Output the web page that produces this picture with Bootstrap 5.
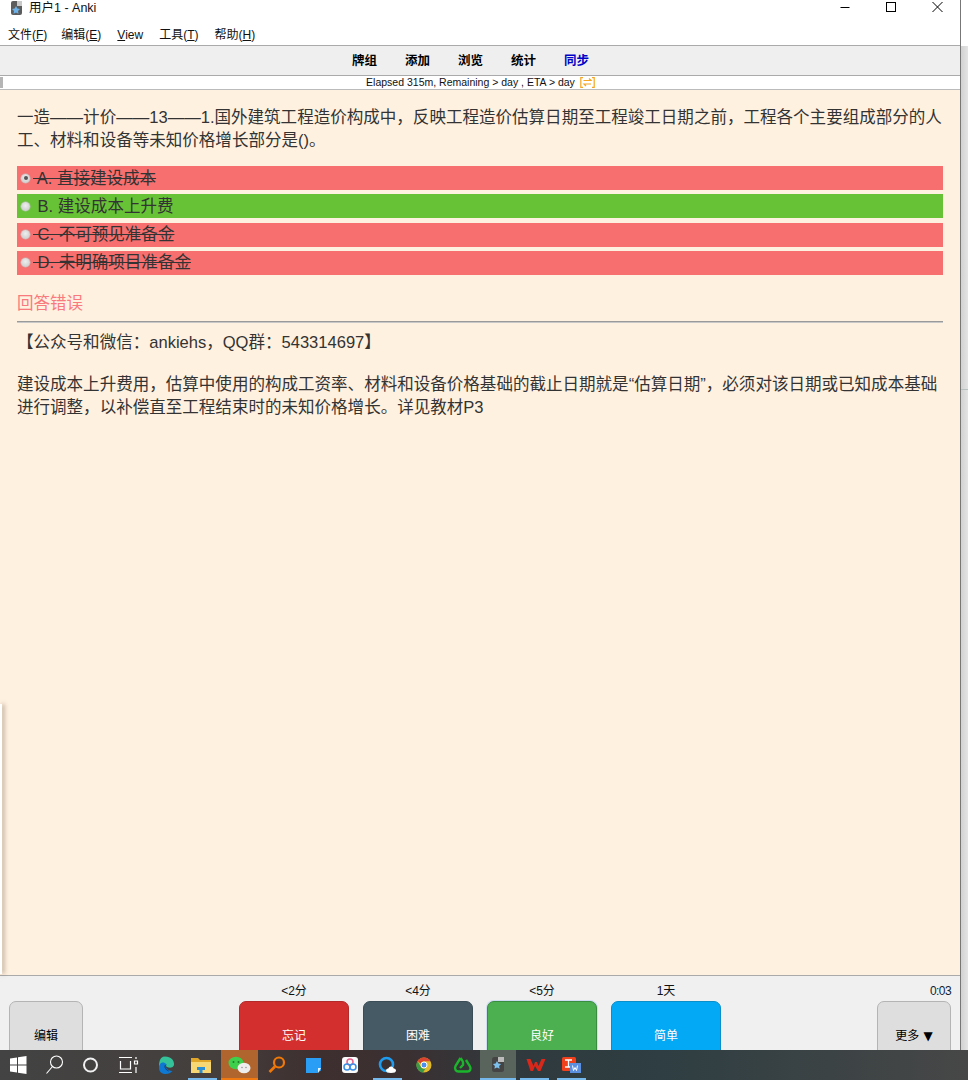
<!DOCTYPE html>
<html lang="zh-CN">
<head>
<meta charset="utf-8">
<title>用户1 - Anki</title>
<link rel="stylesheet" href="https://cdn.jsdelivr.net/npm/bootstrap@5.3.0/dist/css/bootstrap.min.css">
<style>
html,body{height:1080px;overflow:hidden}
body{font-family:"Liberation Sans","Noto Sans CJK SC",sans-serif;font-size:12px;color:#000;background:#fff;position:relative}
.desk{height:1050px}
.win{width:961px;border-right:1px solid #777}
.strip{width:7px;background:linear-gradient(90deg,#d2d2d2,#e4e4e4);position:relative;overflow:hidden}
.strip-top{height:46px;background:#fff}
.strip-line{height:1px;background:#b9c0c0;margin-top:343px}
.titlebar{height:22px;padding-left:10px}
.title-text{margin-left:6px;line-height:17px;font-size:12.5px;color:#111}
.winctl{position:absolute;top:0;right:8px}
.winctl svg{display:block}
.ctl{width:46px;height:15px}
.menubar{height:23px;padding-left:8px;line-height:27px;color:#111}
.menu-first{margin-right:-2px}
.toolbar{height:31px;background:#efefef;border-top:1px solid #aaa;border-bottom:1px solid #aaa;padding:2px 19px 0 0;font-weight:700;font-size:12.5px;gap:28px;line-height:27px}
.toolbar .sync{color:#0000c8}
.progressrow{height:13px;background:#fff;font-size:10.5px;line-height:13px;position:relative;color:#111;padding-left:1px}
.tick{position:absolute;left:0;top:1px;width:3px;height:11px;background:#b5b5b5}
.orange{margin-left:5px}
.content{height:887px;background:#fff1e0;border-top:1px solid #bbb;border-bottom:1px solid #aaa;padding:16px 17px 0;color:#333;font-size:16.55px;line-height:23px;position:relative}
.qtext{margin:0 0 14px}
.opt{height:24px;line-height:23px;margin-bottom:4.3px;display:flex;align-items:center;padding-left:4px;white-space:pre}
.opt-bad{background:#f76f6f}
.opt-good{background:#67c236}
.struck{text-decoration:line-through}
.radio{width:9px;height:9px;border-radius:50%;background:radial-gradient(circle at 50% 40%,#eee,#c4c4c4);box-shadow:0 0 0 .5px #bbb;margin-right:3px;flex:none;display:flex;align-items:center;justify-content:center}
.radio i{display:block;width:4px;height:4px;border-radius:50%;background:#555}
.wrong{color:#f87a7f;margin-top:17px;line-height:24px}
.rule{background:#9a9a9a;margin:5px 0 8px;border-bottom:1px solid #c8c8c8;height:2px}
.explain{margin:0;line-height:23px}
.explain-gap{height:19px}
.floatpanel{position:absolute;left:0;top:704px;width:2px;height:270px;background:#fff;box-shadow:2px 0 4px rgba(70,50,30,.55);z-index:3}
.bottombar{height:74px;background:#f0f0f0;overflow:hidden;padding:0 9px;position:relative}
.anscol{width:110px;text-align:center}
.lbl{height:25px;line-height:31px;color:#111;white-space:nowrap}
.ans{display:block;width:100%;height:68px;padding:0;border-radius:7px;font-size:12px;line-height:68px;color:#fff;border:1px solid transparent}
.ans:hover,.ans:active{color:#fff}
.a-red{background:#d32f2f;border-color:#b22a2a}
.a-slate{background:#455a64;border-color:#3b4d56}
.a-green{background:#4caf50;border-color:#3a8c3e;box-shadow:0 0 0 1px #cfdcf2}
.a-blue{background:#03a9f4;border-color:#0a8fcb}
.grey{width:74px;background:#dedede;border-color:#b4b4b4;color:#000}
.grey:hover,.grey:active{color:#000}
.down{font-family:"DejaVu Sans",sans-serif;font-size:12px;margin-left:1px}
.sidecol{width:74px;text-align:center}
.timer{height:25px;line-height:31px;text-align:right;color:#123;letter-spacing:-.6px}
.center-group{gap:14px;position:absolute;left:239px;top:0}
.taskbar{height:30px;background:linear-gradient(90deg,#434343 0,#443f3d 22%,#3e2f2f 33%,#3a3032 42%,#2f3a3e 55%,#2e3e42 68%,#474747 100%)}
.cell{width:36.9px;height:30px;position:relative;flex:none}
.cell svg{display:block}
.cell.on-o{background:#b0652e}
.cell.on-o::after{content:"";position:absolute;left:0;right:0;bottom:0;height:2px;background:#f07810}
.cell.on-a{background:#58645c}
.cell.on-a::after{content:"";position:absolute;left:0;right:0;bottom:0;height:2px;background:#76b9ed}
.cell.run::after{content:"";position:absolute;left:4px;right:4px;bottom:0;height:2px;background:#76b9ed}
</style>
</head>
<body>
<div class="floatpanel"></div>
<div class="desk d-flex">
  <div class="win d-flex flex-column">
    <div class="titlebar d-flex align-items-start">
      <svg width="13" height="16" viewBox="0 0 13 16"><rect x="1" y="1" width="11" height="14" rx="2" fill="#5c5c5c"/><rect x="7" y="1" width="5" height="5" fill="#c9c9c9"/><path d="M6 6l1.300 2.600 2.700.4-2 2 .5 2.800L6 12.500l-2.500 1.300.5-2.800-2-2 2.700-.4z" fill="#6cb2e8"/></svg>
      <span class="title-text">用户1 - Anki</span>
    </div>
    <div class="menubar d-flex gap-3">
      <span class="menu-first">文件(<u>F</u>)</span><span>编辑(<u>E</u>)</span><span><u>V</u>iew</span><span>工具(<u>T</u>)</span><span>帮助(<u>H</u>)</span>
    </div>
    <div class="toolbar d-flex justify-content-center">
      <span>牌组</span><span>添加</span><span>浏览</span><span>统计</span><span class="sync">同步</span>
    </div>
    <div class="progressrow d-flex justify-content-center align-items-center">
      <div class="tick"></div>
      <span>Elapsed 315m, Remaining &gt; day , ETA &gt; day</span>
      <svg class="orange" width="15" height="11" viewBox="0 0 15 11" fill="none" stroke="#f5a623" stroke-width="1.200"><path d="M3 .6H.8v9.800H3M12 .6h2.200v9.800H12M3.500 3.500h7.500l-2-2M11 7H4l2 2"/></svg>
    </div>
    <div class="content">
      <p class="qtext">一造——计价——13——1.国外建筑工程造价构成中，反映工程造价估算日期至工程竣工日期之前，工程各个主要组成部分的人工、材料和设备等未知价格增长部分是()。</p>
      <div class="opt opt-bad"><span class="radio"><i></i></span><span class="struck"> A. 直接建设成本</span></div>
      <div class="opt opt-good"><span class="radio"></span><span> B. 建设成本上升费</span></div>
      <div class="opt opt-bad"><span class="radio"></span><span class="struck"> C. 不可预见准备金</span></div>
      <div class="opt opt-bad"><span class="radio"></span><span class="struck"> D. 未明确项目准备金</span></div>
      <div class="wrong">回答错误</div>
      <div class="rule"></div>
      <p class="explain">【公众号和微信：ankiehs，QQ群：543314697】</p>
      <div class="explain-gap"></div>
      <p class="explain">建设成本上升费用，估算中使用的构成工资率、材料和设备价格基础的截止日期就是“估算日期”，必须对该日期或已知成本基础进行调整，以补偿直至工程结束时的未知价格增长。详见教材P3</p>
    </div>
    <div class="bottombar d-flex justify-content-between">
      <div class="sidecol"><div class="lbl">&nbsp;</div><button type="button" class="btn ans grey">编辑</button></div>
      <div class="center-group d-flex">
        <div class="anscol"><div class="lbl">&lt;2分</div><button type="button" class="btn ans a-red">忘记</button></div>
        <div class="anscol"><div class="lbl">&lt;4分</div><button type="button" class="btn ans a-slate">困难</button></div>
        <div class="anscol"><div class="lbl">&lt;5分</div><button type="button" class="btn ans a-green">良好</button></div>
        <div class="anscol"><div class="lbl">1天</div><button type="button" class="btn ans a-blue">简单</button></div>
      </div>
      <div class="sidecol"><div class="timer">0:03</div><button type="button" class="btn ans grey">更多 <span class="down">▼</span></button></div>
    </div>
  </div>
  <div class="strip"><div class="strip-top"></div><div class="strip-line"></div></div>
</div>
<div class="winctl d-flex">
  <div class="ctl d-flex justify-content-center"><svg width="12" height="14" viewBox="0 0 12 14"><path d="M1.500 7.500h9" stroke="#000"/></svg></div>
  <div class="ctl d-flex justify-content-center"><svg width="12" height="14" viewBox="0 0 12 14"><rect x="1.500" y="2.500" width="9" height="9" fill="none" stroke="#000"/></svg></div>
  <div class="ctl d-flex justify-content-center"><svg width="12" height="14" viewBox="0 0 12 14"><path d="M1.500 2l10 10M11.500 2l-10 10" stroke="#000"/></svg></div>
</div>
<div class="taskbar d-flex">
  <div class="cell"><svg width="37" height="30" viewBox="0 0 37 30"><path d="M10 8.500l7-1v7h-7zM18 7.300l8.500-1.200v8.400H18zM10 15.500h7v7l-7-1zM18 15.500h8.500v8.400L18 22.700z" fill="#fff"/></svg></div>
  <div class="cell"><svg width="37" height="30" viewBox="0 0 37 30" fill="none" stroke="#fff" stroke-width="1.100"><circle cx="19.500" cy="12" r="6"/><path d="M15.500 16.500L9.500 23.500"/></svg></div>
  <div class="cell"><svg width="37" height="30" viewBox="0 0 37 30"><circle cx="16.500" cy="15" r="6.500" fill="none" stroke="#f0f0f0" stroke-width="2"/></svg></div>
  <div class="cell"><svg width="37" height="30" viewBox="0 0 37 30" fill="none" stroke="#fff" stroke-width="1.200"><path d="M8 7.500h13M8 22.500h13M9.500 11v8h10v-8"/><path d="M23.500 11v3h3v-3zM25 17v6"/><path d="M25 7v2"/></svg></div>
  <div class="cell"><svg width="37" height="30" viewBox="0 0 37 30"><path d="M17 6.500c6 0 9.500 4 9 8.500-.3 2-3 3-5.500 2.500-2.500-.6-3-2-2-3-3-1.500-7-.5-7.500 3.500C11 14 11 6.500 17 6.500z" fill="#33c29a"/><path d="M11 18c0-5 4-7.500 7.500-3.500-2 2.500.5 6 6 6.500-2 2-5 3.500-8 3-3.500-.5-5.500-3-5.500-6z" fill="#0f78d0"/><path d="M17.500 15c-1.500 2 .5 5 3 6" stroke="#063a7a" fill="none"/></svg></div>
  <div class="cell run"><svg width="37" height="30" viewBox="0 0 37 30"><path d="M7 8h7l2 2h11v3H7z" fill="#e0a62a"/><path d="M7 12h20v11H7z" fill="#f7d774"/><path d="M13 20v-3h8v3h-2.500v3h-3v-3z" fill="#2b8fd6"/></svg></div>
  <div class="cell on-o"><svg width="37" height="30" viewBox="0 0 37 30"><ellipse cx="15" cy="13" rx="7.500" ry="6.200" fill="#3ecf4c"/><ellipse cx="23" cy="18" rx="6.500" ry="5.200" fill="#eee"/><circle cx="12.500" cy="12" r="1" fill="#237a2c"/><circle cx="17.500" cy="12" r="1" fill="#237a2c"/><circle cx="21" cy="17.500" r=".8" fill="#999"/><circle cx="25" cy="17.500" r=".8" fill="#999"/></svg></div>
  <div class="cell"><svg width="37" height="30" viewBox="0 0 37 30" fill="none" stroke="#f07808" stroke-width="2.200"><circle cx="21" cy="12.500" r="5"/><path d="M17 16.500L11.500 22" stroke-width="2.600"/></svg></div>
  <div class="cell"><svg width="37" height="30" viewBox="0 0 37 30"><path d="M11 8h15v12.500L22.500 23H11z" fill="#2a9df4"/><path d="M23 23v-5h3" fill="#e6f3ff"/></svg></div>
  <div class="cell"><svg width="37" height="30" viewBox="0 0 37 30"><rect x="10" y="7" width="16" height="16" rx="3" fill="#fbfbfb"/><circle cx="18" cy="12" r="3" fill="none" stroke="#e8608c" stroke-width="1.500"/><circle cx="15" cy="17" r="3" fill="none" stroke="#3a8ee6" stroke-width="1.500"/><circle cx="21" cy="17" r="3" fill="none" stroke="#3a8ee6" stroke-width="1.500"/></svg></div>
  <div class="cell run"><svg width="37" height="30" viewBox="0 0 37 30"><circle cx="17.500" cy="14.500" r="6.500" fill="none" stroke="#1e9cf0" stroke-width="2.600"/><ellipse cx="22" cy="20.500" rx="5" ry="2.500" fill="#fff"/><circle cx="22" cy="19" r="2.500" fill="#fff"/></svg></div>
  <div class="cell"><svg width="37" height="30" viewBox="0 0 37 30"><circle cx="18" cy="15" r="7.500" fill="#e0b92c"/><path d="M18 7.500a7.500 7.500 0 0 1 6.500 3.750H18a3.750 3.750 0 0 0-3.400 2.200L11.500 11A7.500 7.500 0 0 1 18 7.500z" fill="#d9432f"/><path d="M11.500 11l3.400 6a3.750 3.750 0 0 0 4.600 1.500l-2.500 4A7.500 7.500 0 0 1 11.500 11z" fill="#3a9a4a"/><circle cx="18" cy="15" r="3" fill="#4a8ef0" stroke="#fff"/></svg></div>
  <div class="cell"><svg width="37" height="30" viewBox="0 0 37 30" fill="none" stroke="#1bb52c" stroke-width="2.400"><path d="M17.500 8l-5 8c-1.500 3 .5 5.500 3 5.500h9c2.500 0 4-2.500 2.500-5L23 10M17.500 8c2 2 3 4.500 2.500 7l-3 3"/></svg></div>
  <div class="cell on-a"><svg width="37" height="30" viewBox="0 0 37 30"><rect x="12" y="7" width="12" height="15" rx="2.500" fill="#444"/><rect x="18" y="7" width="6" height="5" fill="#bcbcbc"/><path d="M17 11l1.300 2.600 2.800.4-2 2 .5 2.800-2.600-1.300-2.600 1.300.5-2.800-2-2 2.800-.4z" fill="#7cc0ee"/></svg></div>
  <div class="cell run"><svg width="37" height="30" viewBox="0 0 37 30"><path d="M10.500 9h4l3 7 1.500-4h2l1.500 4 3-7h4l-5 12h-2.500L19 16l-2 5h-2.500z" fill="#d8281c"/></svg></div>
  <div class="cell run"><svg width="37" height="30" viewBox="0 0 37 30"><rect x="9" y="7" width="14" height="14" rx="1.500" fill="#f0401c"/><path d="M12 10h7M15.500 10v7M12 17h7" stroke="#fff" stroke-width="1.300"/><rect x="17" y="13" width="11" height="10" fill="#5b8fe0"/><path d="M19.500 15.500l1 5 1.500-3 1.500 3 1-5" stroke="#fff" fill="none"/></svg></div>
</div>
</body>
</html>
